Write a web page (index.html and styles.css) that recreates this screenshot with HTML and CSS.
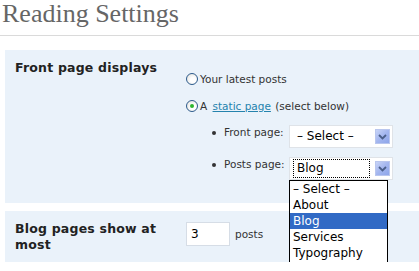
FILE: index.html
```html
<!DOCTYPE html>
<html>
<head>
<meta charset="utf-8">
<link rel="stylesheet" href="styles.css">
</head>
<body>
<h1 class="title">Reading Settings</h1>
<div class="panel panel-front">
  <div class="label">Front page displays</div>
  <div class="options">
    <div class="radio-row"><span class="radio"></span><span>Your latest posts</span></div>
    <div class="radio-row"><span class="radio checked"></span><span>A <a class="link" href="#">static page</a> (select below)</span></div>
    <ul class="pages">
      <li class="page-row">
        <span class="page-label">Front page:</span>
        <div class="select"><span class="select-text">– Select –</span><span class="arrow"><svg width="9" height="6" viewBox="0 0 9 6"><path d="M1 1 L4.5 4.5 L8 1" fill="none" stroke="#4a5f8a" stroke-width="1.8"/></svg></span></div>
      </li>
      <li class="page-row">
        <span class="page-label">Posts page:</span>
        <div class="select-wrap">
          <div class="select"><span class="select-text focused">Blog</span><span class="arrow"><svg width="9" height="6" viewBox="0 0 9 6"><path d="M1 1 L4.5 4.5 L8 1" fill="none" stroke="#4a5f8a" stroke-width="1.8"/></svg></span></div>
          <div class="dropdown">
            <div class="item">– Select –</div>
            <div class="item">About</div>
            <div class="item active">Blog</div>
            <div class="item">Services</div>
            <div class="item">Typography</div>
          </div>
        </div>
      </li>
    </ul>
  </div>
</div>
<div class="panel panel-blog">
  <div class="label">Blog pages show at most</div>
  <div class="posts-row"><span class="num-input">3</span><span class="posts">posts</span></div>
</div>
</body>
</html>
```
FILE: styles.css
```css
html, body { margin: 0; padding: 0; background: #fff; }
body { font-family: "DejaVu Sans", Verdana, sans-serif; font-size: 10.5px; color: #333; width: 419px; overflow: hidden; }
.title {
  font-family: "Liberation Serif", "Times New Roman", serif;
  font-weight: normal;
  font-size: 26px;
  line-height: 28px;
  color: #666;
  margin: 0;
  padding: 0 0 0 2px;
  height: 35px;
  border-bottom: 1px solid #dadada;
  box-sizing: content-box;
}
.panel {
  background: #eaf2fa;
  margin-left: 5px;
  display: grid;
  grid-template-columns: 180px 1fr;
}
.panel-front { margin-top: 14px; height: 153px; }
.panel-blog { margin-top: 8px; height: 51px; }
.label {
  font-weight: bold;
  font-size: 12.5px;
  color: #222;
  line-height: 16px;
  padding: 10px 20px 0 10px;
  letter-spacing: 0.2px;
}
.options { padding-top: 15px; }
.radio-row { display: flex; align-items: center; height: 27px; color: #333; }
.radio {
  width: 10px; height: 10px; border-radius: 50%;
  border: 1px solid #2d5b8c;
  background: radial-gradient(circle at 60% 60%, #fff 30%, #dcdcd6 100%);
  margin: 0 2px 0 1px;
  position: relative;
}
.radio.checked::after {
  content: ""; position: absolute; left: 3px; top: 3px; width: 4px; height: 4px; border-radius: 50%;
  background: #2fb52f;
}
.link { color: #2583ad; text-decoration: underline; margin-left: 2px; margin-right: 1px; }
.pages { list-style: none; margin: 6px 0 0 0; padding: 0 0 0 28px; }
.page-row { display: flex; align-items: flex-start; margin-bottom: 9px; position: relative; }
.page-row::before {
  content: ""; width: 4px; height: 4px; border-radius: 50%; background: #333;
  position: absolute; left: -1px; top: 6px;
}
.page-label { width: 65px; padding-left: 11px; line-height: 14px; color: #333; }
.select {
  width: 97px; height: 21px; border: 1px solid #dfe3e8; background: #fff;
  display: flex; align-items: center; justify-content: space-between;
  padding: 0 2px 0 3px; box-sizing: content-box;
}
.select-text { font-size: 12px; color: #000; padding: 1px 3px; line-height: 15px; border: 1px dotted transparent; }
.select-text.focused { border-color: #000; width: 69px; }
.arrow {
  width: 15px; height: 15px; display: flex; align-items: center; justify-content: center;
  background: linear-gradient(135deg, #c8d4f7 0%, #a3b6ef 50%, #8ea6ea 100%);
  border: 1px solid #b9c6ee; box-sizing: border-box;
}
.select-wrap { position: relative; }
.dropdown {
  position: absolute; left: 0; top: 23px; width: 97px;
  border: 1px solid #000; background: #fff; font-size: 12px; color: #000;
  padding-bottom: 1px;
}
.item { height: 16px; line-height: 16px; padding-left: 3px; }
.item.active { background: #316ac5; color: #fff; }
.posts-row { display: flex; align-items: center; padding-top: 11px; align-self: start; }
.num-input {
  width: 38px; height: 22px; border: 1px solid #d6dde6; background: #fff;
  font-size: 12px; color: #000; line-height: 22px; padding-left: 4px; margin-left: 1px;
}
.posts { margin-left: 5px; color: #333; }
```
